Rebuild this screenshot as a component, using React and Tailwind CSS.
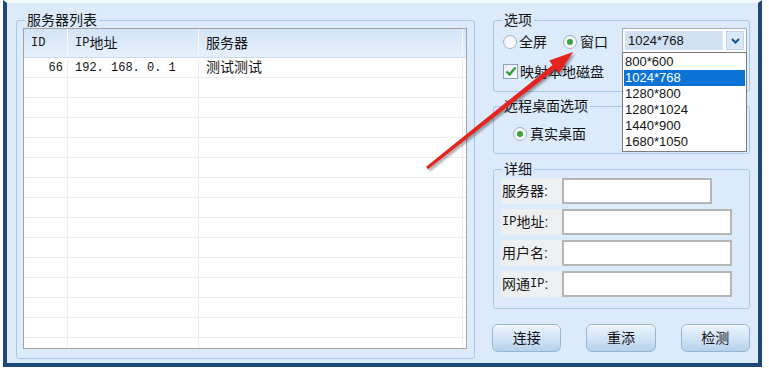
import React from "react";

const ROWS = [{ id: "66", ip: "192.168.0.1", name: "测试测试" }];
const SIZES = ["800*600", "1024*768", "1280*800", "1280*1024", "1440*900", "1680*1050"];

function Latin({ children }) {
    return <span className="font-['Liberation_Mono'] text-[12px]">{children}</span>;
}

function Radio({ checked }) {
    return (
        <span className="w-[14px] h-[14px] rounded-full border border-[#9fb3c8] bg-gradient-to-br from-[#e9eef4] to-white flex items-center justify-center shrink-0">
            {checked && <span className="w-[6px] h-[6px] rounded-full bg-[#3aa43a]" />}
        </span>
    );
}

function Group({ title, className, children }) {
    return (
        <fieldset className={`border border-[#a9c8e8] rounded-[3px] min-w-0 ${className}`}>
            <legend className="ml-[8px] px-[2px] leading-[16px]">{title}</legend>
            {children}
        </fieldset>
    );
}

function Field({ label, inputWidth }) {
    return (
        <div className="flex h-[26px]">
            <div className="w-[61px] bg-[#eeeff1] flex items-center pl-[1px] leading-none">{label}</div>
            <div className={`${inputWidth} h-full bg-white border-2 border-[#b5b5b5]`} />
        </div>
    );
}

function Btn({ children }) {
    return (
        <button className="w-[70px] h-[28px] rounded-[6px] border border-[#97b5d4] bg-gradient-to-b from-[#eaf3fc] via-[#d3e5f6] to-[#b6d1ec] shadow-[inset_0_1px_0_#ffffff] text-[14px] leading-none">
            {children}
        </button>
    );
}

export default function App() {
    const emptyRows = Array.from({ length: 14 });

    return (
        <div className="relative w-[769px] h-[370px] bg-white overflow-hidden font-['Liberation_Sans','Noto_Sans_CJK_SC',sans-serif] text-[14px] text-[#141414]">
            <div className="ml-[3px] w-[759px] h-[367px] border-x-4 border-b-4 border-[#1c4978] border-t-[3px] border-t-[#f3f8fd] bg-[#dcebfc] flex pl-[9px] pt-[9px]">
                {/* Left: server list */}
                <Group title="服务器列表" className="w-[459px] h-[347px]">
                    <div className="ml-[6px] w-[444px] h-[321px] border border-[#a3a3a3] bg-white overflow-hidden">
                        <div className="flex h-[29px] bg-gradient-to-b from-[#d2e4f7] to-[#e6f0fb] border-b border-[#c8dbef]">
                            <div className="w-[44px] border-r border-[#f4f9fe] flex items-center pl-[7px]">
                                <Latin>ID</Latin>
                            </div>
                            <div className="w-[131px] border-r border-[#f4f9fe] flex items-center pl-[7px]">
                                <Latin>IP</Latin>地址
                            </div>
                            <div className="w-[264px] border-r border-[#f4f9fe] flex items-center pl-[7px]">服务器</div>
                        </div>
                        {ROWS.map((r) => (
                            <div key={r.id} className="flex h-[20px] border-b border-[#ececec]">
                                <div className="w-[44px] border-r border-[#ececec] flex items-center justify-end pr-[4px]">
                                    <Latin>{r.id}</Latin>
                                </div>
                                <div className="w-[131px] border-r border-[#ececec] flex items-center pl-[7px]">
                                    <Latin>{r.ip.split(".").join(". ")}</Latin>
                                </div>
                                <div className="w-[264px] border-r border-[#ececec] flex items-center pl-[7px]">{r.name}</div>
                            </div>
                        ))}
                        {emptyRows.map((_, i) => (
                            <div key={i} className="flex h-[20px] border-b border-[#ececec]">
                                <div className="w-[44px] border-r border-[#ececec]" />
                                <div className="w-[131px] border-r border-[#ececec]" />
                                <div className="w-[264px] border-r border-[#ececec]" />
                            </div>
                        ))}
                    </div>
                </Group>

                {/* Right column */}
                <div className="w-[257px] ml-[18px] flex flex-col">
                    <Group title="选项" className="h-[80px]">
                        <div className="flex items-start h-[25px] pl-[9px]">
                            <div className="flex items-center mt-[7px] gap-[2px]">
                                <Radio />
                                <span className="leading-none">全屏</span>
                            </div>
                            <div className="flex items-center mt-[7px] ml-[16px] gap-[3px]">
                                <Radio checked />
                                <span className="leading-none">窗口</span>
                            </div>
                            <div className="relative ml-auto mr-[2px] w-[125px] h-[25px] border border-[#a4acb6] bg-white flex items-center p-[2px] gap-[3px]">
                                <div className="flex-1 h-full bg-[#cfe1f3] flex items-center pl-[3px] text-[13px]">1024*768</div>
                                <div className="w-[18px] h-full bg-[#d8e8f8] border border-dotted border-[#a9c5e2] flex items-center justify-center">
                                    <svg width="9" height="6" viewBox="0 0 9 6">
                                        <path d="M1 1 L4.5 4.5 L8 1" fill="none" stroke="#1e4f86" strokeWidth="2" />
                                    </svg>
                                </div>
                                <div className="absolute left-[-1px] top-full w-[125px] h-[100px] border border-[#7d7d7d] bg-white z-10 p-[1px] text-[13px]">
                                    {SIZES.map((s) => (
                                        <div
                                            key={s}
                                            className={`h-[16px] leading-[16px] pl-[1px] ${s === "1024*768" ? "bg-[#0a73d5] text-white" : ""}`}
                                        >
                                            {s}
                                        </div>
                                    ))}
                                </div>
                            </div>
                        </div>
                        <div className="flex items-center mt-[11px] gap-[2px] pl-[9px]">
                            <span className="w-[15px] h-[15px] border border-[#8fa3b8] bg-gradient-to-br from-[#e7edf3] to-white flex items-center justify-center">
                                <svg width="12" height="11" viewBox="0 0 12 11">
                                    <path d="M1.5 5.5 L4.5 8.5 L10.5 1.5" fill="none" stroke="#2f9e35" strokeWidth="2.4" />
                                </svg>
                            </span>
                            <span className="leading-none">映射本地磁盘</span>
                        </div>
                    </Group>

                    <Group title="远程桌面选项" className="h-[56px] mt-[6px]">
                        <div className="flex items-center mt-[13px] gap-[3px] pl-[19px]">
                            <Radio checked />
                            <span className="leading-none">真实桌面</span>
                        </div>
                    </Group>

                    <Group title="详细" className="h-[148px] mt-[7px]">
                        <div className="flex flex-col gap-[5px] mt-[1px] pl-[7px]">
                            <Field label="服务器:" inputWidth="w-[150px]" />
                            <Field label={<><Latin>IP</Latin>地址:</>} inputWidth="w-[170px]" />
                            <Field label="用户名:" inputWidth="w-[170px]" />
                            <Field label={<>网通<Latin>IP</Latin>:</>} inputWidth="w-[170px]" />
                        </div>
                    </Group>

                    <div className="flex gap-[25px] mt-[15px] -ml-[1px]">
                        <Btn>连接</Btn>
                        <Btn>重添</Btn>
                        <Btn>检测</Btn>
                    </div>
                </div>
            </div>

            {/* Red annotation arrow */}
            <svg
                className="absolute inset-0 pointer-events-none drop-shadow-[2px_2px_1px_rgba(0,0,0,0.35)]"
                width="769"
                height="370"
                viewBox="0 0 769 370"
            >
                <polygon
                    points="426.1,166.8 552.6,64.9 549.2,60.6 573,52 559.2,73.2 555.8,68.9 427.9,169.2"
                    fill="#e5231f"
                />
            </svg>
        </div>
    );
}
